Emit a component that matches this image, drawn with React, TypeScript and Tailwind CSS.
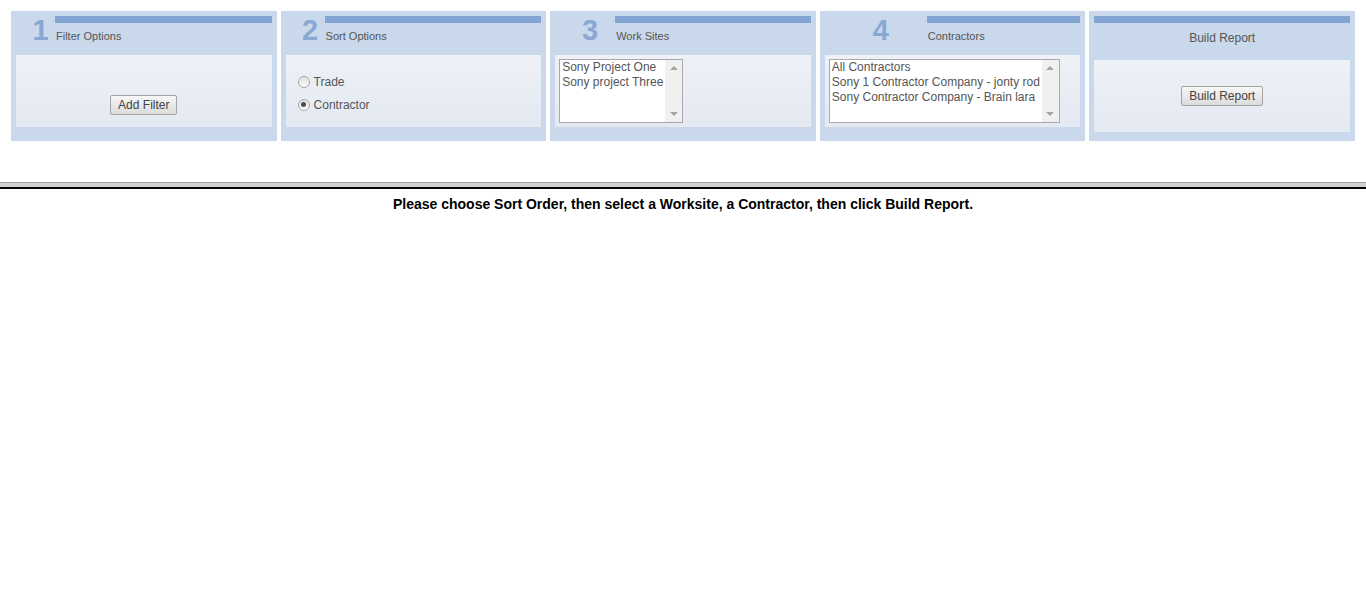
import React from 'react';

const font = "font-['Liberation_Sans',Arial,sans-serif]";

const Btn: React.FC<{ label: string }> = ({ label }) => (
  <button className="h-[20px] px-[7px] text-[12px] leading-[18px] text-[#444] border border-[#a3a3a3] rounded-[2px] bg-gradient-to-b from-[#f7f7f7] to-[#dcdcdc]">
    {label}
  </button>
);

const Radio: React.FC<{ label: string; checked?: boolean }> = ({ label, checked }) => (
  <div className="flex items-center h-[23px]">
    <span className="w-[12px] h-[12px] rounded-full border border-[#a7a7a7] bg-gradient-to-b from-[#e2e2e2] to-[#fbfbfb] flex items-center justify-center">
      {checked && <span className="w-[5px] h-[5px] rounded-full bg-[#4d4d4d]" />}
    </span>
    <span className="ml-[4px] text-[12px] text-[#555]">{label}</span>
  </div>
);

const ListBox: React.FC<{ items: string[]; width: string }> = ({ items, width }) => (
  <div className={`${width} h-[64px] border border-[#a9a9a9] bg-white flex`}>
    <div className="flex-1 pl-[2px] text-[12px] leading-[15px] text-[#555] whitespace-nowrap overflow-hidden">
      {items.map((it) => (
        <div key={it}>{it}</div>
      ))}
    </div>
    <div className="w-[17px] bg-[#f0f0f0] flex flex-col items-center justify-between py-[6px]">
      <span className="w-0 h-0 border-l-[4px] border-r-[4px] border-b-[4px] border-l-transparent border-r-transparent border-b-[#a3a3a3]" />
      <span className="w-0 h-0 border-l-[4px] border-r-[4px] border-t-[4px] border-l-transparent border-r-transparent border-t-[#a3a3a3]" />
    </div>
  </div>
);

const Step: React.FC<{
  num: string;
  title: string;
  numWidth: string;
  children: React.ReactNode;
}> = ({ num, title, numWidth, children }) => (
  <div className="flex-1 h-[130px] bg-[#c9d8eb] p-[5px] flex flex-col">
    <div className="flex h-[39px]">
      <div className={`${numWidth} pl-[10px] text-center text-[29px] leading-[29px] font-bold text-[#8aa7d3]`}>
        {num}
      </div>
      <div className="flex-1">
        <div className="h-[7px] bg-[#84a5d3]" />
        <div className="mt-[7px] pl-[1px] text-[11px] leading-[13px] text-[#555]">{title}</div>
      </div>
    </div>
    <div className="h-[72px] bg-gradient-to-b from-[#eef1f6] to-[#e4e9f2]">{children}</div>
  </div>
);

export default function App() {
  return (
    <div className={`${font} bg-white min-h-screen`}>
      <div className="flex gap-[4px] px-[11px] pt-[11px]">
        <Step num="1" title="Filter Options" numWidth="w-[39px]">
          <div className="h-full flex items-end justify-center pb-[12px]">
            <Btn label="Add Filter" />
          </div>
        </Step>
        <Step num="2" title="Sort Options" numWidth="w-[39px]">
          <div className="pl-[12px] pt-[15px]">
            <Radio label="Trade" />
            <Radio label="Contractor" checked />
          </div>
        </Step>
        <Step num="3" title="Work Sites" numWidth="w-[60px]">
          <div className="pl-[4px] pt-[4px]">
            <ListBox width="w-[124px]" items={['Sony Project One', 'Sony project Three']} />
          </div>
        </Step>
        <Step num="4" title="Contractors" numWidth="w-[102px]">
          <div className="pl-[4px] pt-[4px]">
            <ListBox
              width="w-[231px]"
              items={[
                'All Contractors',
                'Sony 1 Contractor Company - jonty rod',
                'Sony Contractor Company - Brain lara',
              ]}
            />
          </div>
        </Step>
        <div className="flex-1 h-[130px] bg-[#c9d8eb] p-[5px] flex flex-col">
          <div className="h-[7px] bg-[#84a5d3]" />
          <div className="h-[37px] pt-[8px] text-center text-[12px] leading-[14px] text-[#555]">Build Report</div>
          <div className="h-[72px] bg-gradient-to-b from-[#eef1f6] to-[#e4e9f2] flex items-center justify-center">
            <Btn label="Build Report" />
          </div>
        </div>
      </div>

      <div className="mt-[41px] h-[5px] bg-[#cfcfcf] border-t border-[#a0a0a0]" />
      <div className="h-[2px] bg-black" />
      <div className="pt-[7px] text-center text-[14px] leading-[16px] font-bold text-black">
        Please choose Sort Order, then select a Worksite, a Contractor, then click Build Report.
      </div>
    </div>
  );
}
